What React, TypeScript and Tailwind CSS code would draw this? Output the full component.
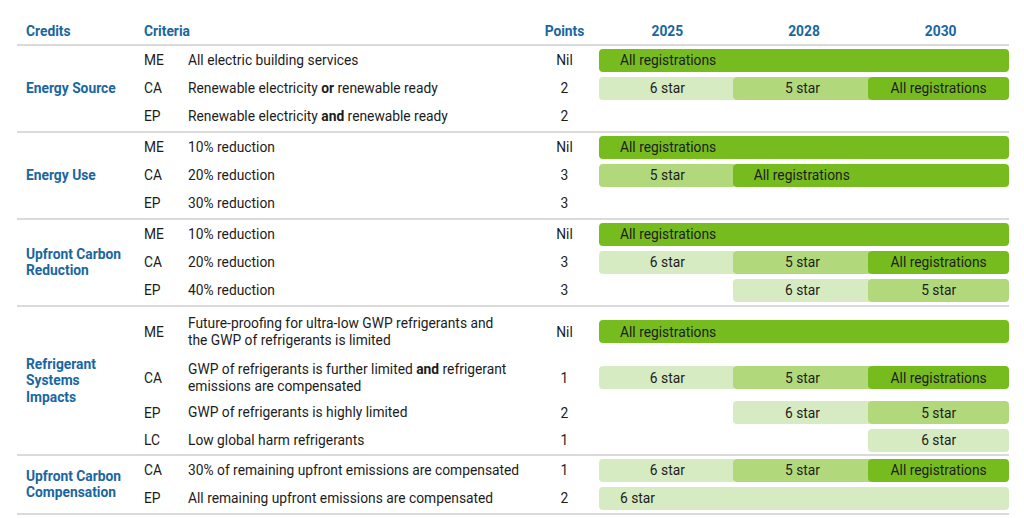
import type { ReactNode } from "react";

type Tone = "dark" | "mid" | "light";

interface Segment {
	start: 1 | 2 | 3;
	span: 1 | 2 | 3;
	tone: Tone;
	label: string;
	left?: boolean;
}

interface Row {
	code: string;
	desc: ReactNode;
	pts: string;
	h: string;
	bar: Segment[];
}

interface Group {
	credit: ReactNode;
	rows: Row[];
}

const toneClass: Record<Tone, string> = {
	dark: "bg-[#77bc1f]",
	mid: "bg-[#b1d97b]",
	light: "bg-[#d6ebc1]",
};

const startClass = {
	1: "col-start-1",
	2: "col-start-2 -ml-[3px]",
	3: "col-start-3 -ml-[4px]",
};

const spanClass = {
	1: "col-span-1",
	2: "col-span-2",
	3: "col-span-3",
};

const R = "h-[28.33px]";

const full = (label: string, tone: Tone = "dark"): Segment[] => [{ start: 1, span: 3, tone, label, left: true }];
const tiers = (): Segment[] => [
	{ start: 1, span: 1, tone: "light", label: "6 star" },
	{ start: 2, span: 1, tone: "mid", label: "5 star" },
	{ start: 3, span: 1, tone: "dark", label: "All registrations" },
];

const groups: Group[] = [
	{
		credit: "Energy Source",
		rows: [
			{ code: "ME", desc: "All electric building services", pts: "Nil", h: R, bar: full("All registrations") },
			{
				code: "CA",
				desc: (
					<>
						Renewable electricity <b>or</b> renewable ready
					</>
				),
				pts: "2",
				h: R,
				bar: tiers(),
			},
			{
				code: "EP",
				desc: (
					<>
						Renewable electricity <b>and</b> renewable ready
					</>
				),
				pts: "2",
				h: R,
				bar: [],
			},
		],
	},
	{
		credit: "Energy Use",
		rows: [
			{ code: "ME", desc: "10% reduction", pts: "Nil", h: R, bar: full("All registrations") },
			{
				code: "CA",
				desc: "20% reduction",
				pts: "3",
				h: R,
				bar: [
					{ start: 1, span: 1, tone: "mid", label: "5 star" },
					{ start: 2, span: 2, tone: "dark", label: "All registrations", left: true },
				],
			},
			{ code: "EP", desc: "30% reduction", pts: "3", h: R, bar: [] },
		],
	},
	{
		credit: (
			<>
				Upfront Carbon
				<br />
				Reduction
			</>
		),
		rows: [
			{ code: "ME", desc: "10% reduction", pts: "Nil", h: R, bar: full("All registrations") },
			{ code: "CA", desc: "20% reduction", pts: "3", h: R, bar: tiers() },
			{
				code: "EP",
				desc: "40% reduction",
				pts: "3",
				h: R,
				bar: [
					{ start: 2, span: 1, tone: "light", label: "6 star" },
					{ start: 3, span: 1, tone: "mid", label: "5 star" },
				],
			},
		],
	},
	{
		credit: (
			<>
				Refrigerant
				<br />
				Systems
				<br />
				Impacts
			</>
		),
		rows: [
			{
				code: "ME",
				desc: (
					<>
						Future-proofing for ultra-low GWP refrigerants and
						<br />
						the GWP of refrigerants is limited
					</>
				),
				pts: "Nil",
				h: "h-[50px]",
				bar: full("All registrations"),
			},
			{
				code: "CA",
				desc: (
					<>
						GWP of refrigerants is further limited <b>and</b> refrigerant
						<br />
						emissions are compensated
					</>
				),
				pts: "1",
				h: "h-[42px]",
				bar: tiers(),
			},
			{
				code: "EP",
				desc: "GWP of refrigerants is highly limited",
				pts: "2",
				h: "h-[28px]",
				bar: [
					{ start: 2, span: 1, tone: "light", label: "6 star" },
					{ start: 3, span: 1, tone: "mid", label: "5 star" },
				],
			},
			{
				code: "LC",
				desc: "Low global harm refrigerants",
				pts: "1",
				h: "h-[27px]",
				bar: [{ start: 3, span: 1, tone: "light", label: "6 star" }],
			},
		],
	},
	{
		credit: (
			<>
				Upfront Carbon
				<br />
				Compensation
			</>
		),
		rows: [
			{
				code: "CA",
				desc: "30% of remaining upfront emissions are compensated",
				pts: "1",
				h: "h-[28.5px]",
				bar: tiers(),
			},
			{
				code: "EP",
				desc: "All remaining upfront emissions are compensated",
				pts: "2",
				h: "h-[28.5px]",
				bar: full("6 star", "light"),
			},
		],
	},
];

function Bar({ segments }: { segments: Segment[] }) {
	return (
		<div className="grid grid-cols-3 h-[23px]">
			{segments.map((s) => (
				<div
					key={`${s.start}-${s.label}`}
					className={`${startClass[s.start]} ${spanClass[s.span]} ${toneClass[s.tone]} row-start-1 rounded-[4px] flex items-center ${
						s.left ? "justify-start pl-[21px]" : "justify-center"
					}`}
				>
					{s.label}
				</div>
			))}
		</div>
	);
}

function Divider() {
	return <div className="h-[2px] bg-[#dadada]" />;
}

export default function App() {
	return (
		<div className="w-[1024px] h-[518px] bg-white text-[13.8px] text-[#1c1c1c] font-['Roboto',sans-serif] overflow-hidden">
			<div className="ml-[17px] w-[992px]">
				{/* Header */}
				<div className="flex h-[44px] items-center pt-[18px] font-bold text-[#1a66a0]">
					<div className="w-[127px] pl-[9px]">Credits</div>
					<div className="w-[386px]">Criteria</div>
					<div className="w-[69px] text-center">Points</div>
					<div className="flex-1 grid grid-cols-3 text-center">
						<span>2025</span>
						<span>2028</span>
						<span>2030</span>
					</div>
				</div>
				<Divider />

				{groups.map((g, gi) => (
					<div key={gi}>
						<div className="flex">
							<div className="w-[127px] pl-[9px] flex items-center font-bold text-[#1a66a0] leading-[16.5px]">
								<span>{g.credit}</span>
							</div>
							<div className="flex-1">
								{g.rows.map((r) => (
									<div key={r.code} className={`flex items-center ${r.h}`}>
										<div className="w-[44px]">{r.code}</div>
										<div className="w-[342px] leading-[17px] whitespace-nowrap">{r.desc}</div>
										<div className="w-[69px] text-center">{r.pts}</div>
										<div className="flex-1">
											<Bar segments={r.bar} />
										</div>
									</div>
								))}
							</div>
						</div>
						<Divider />
					</div>
				))}
			</div>
		</div>
	);
}
